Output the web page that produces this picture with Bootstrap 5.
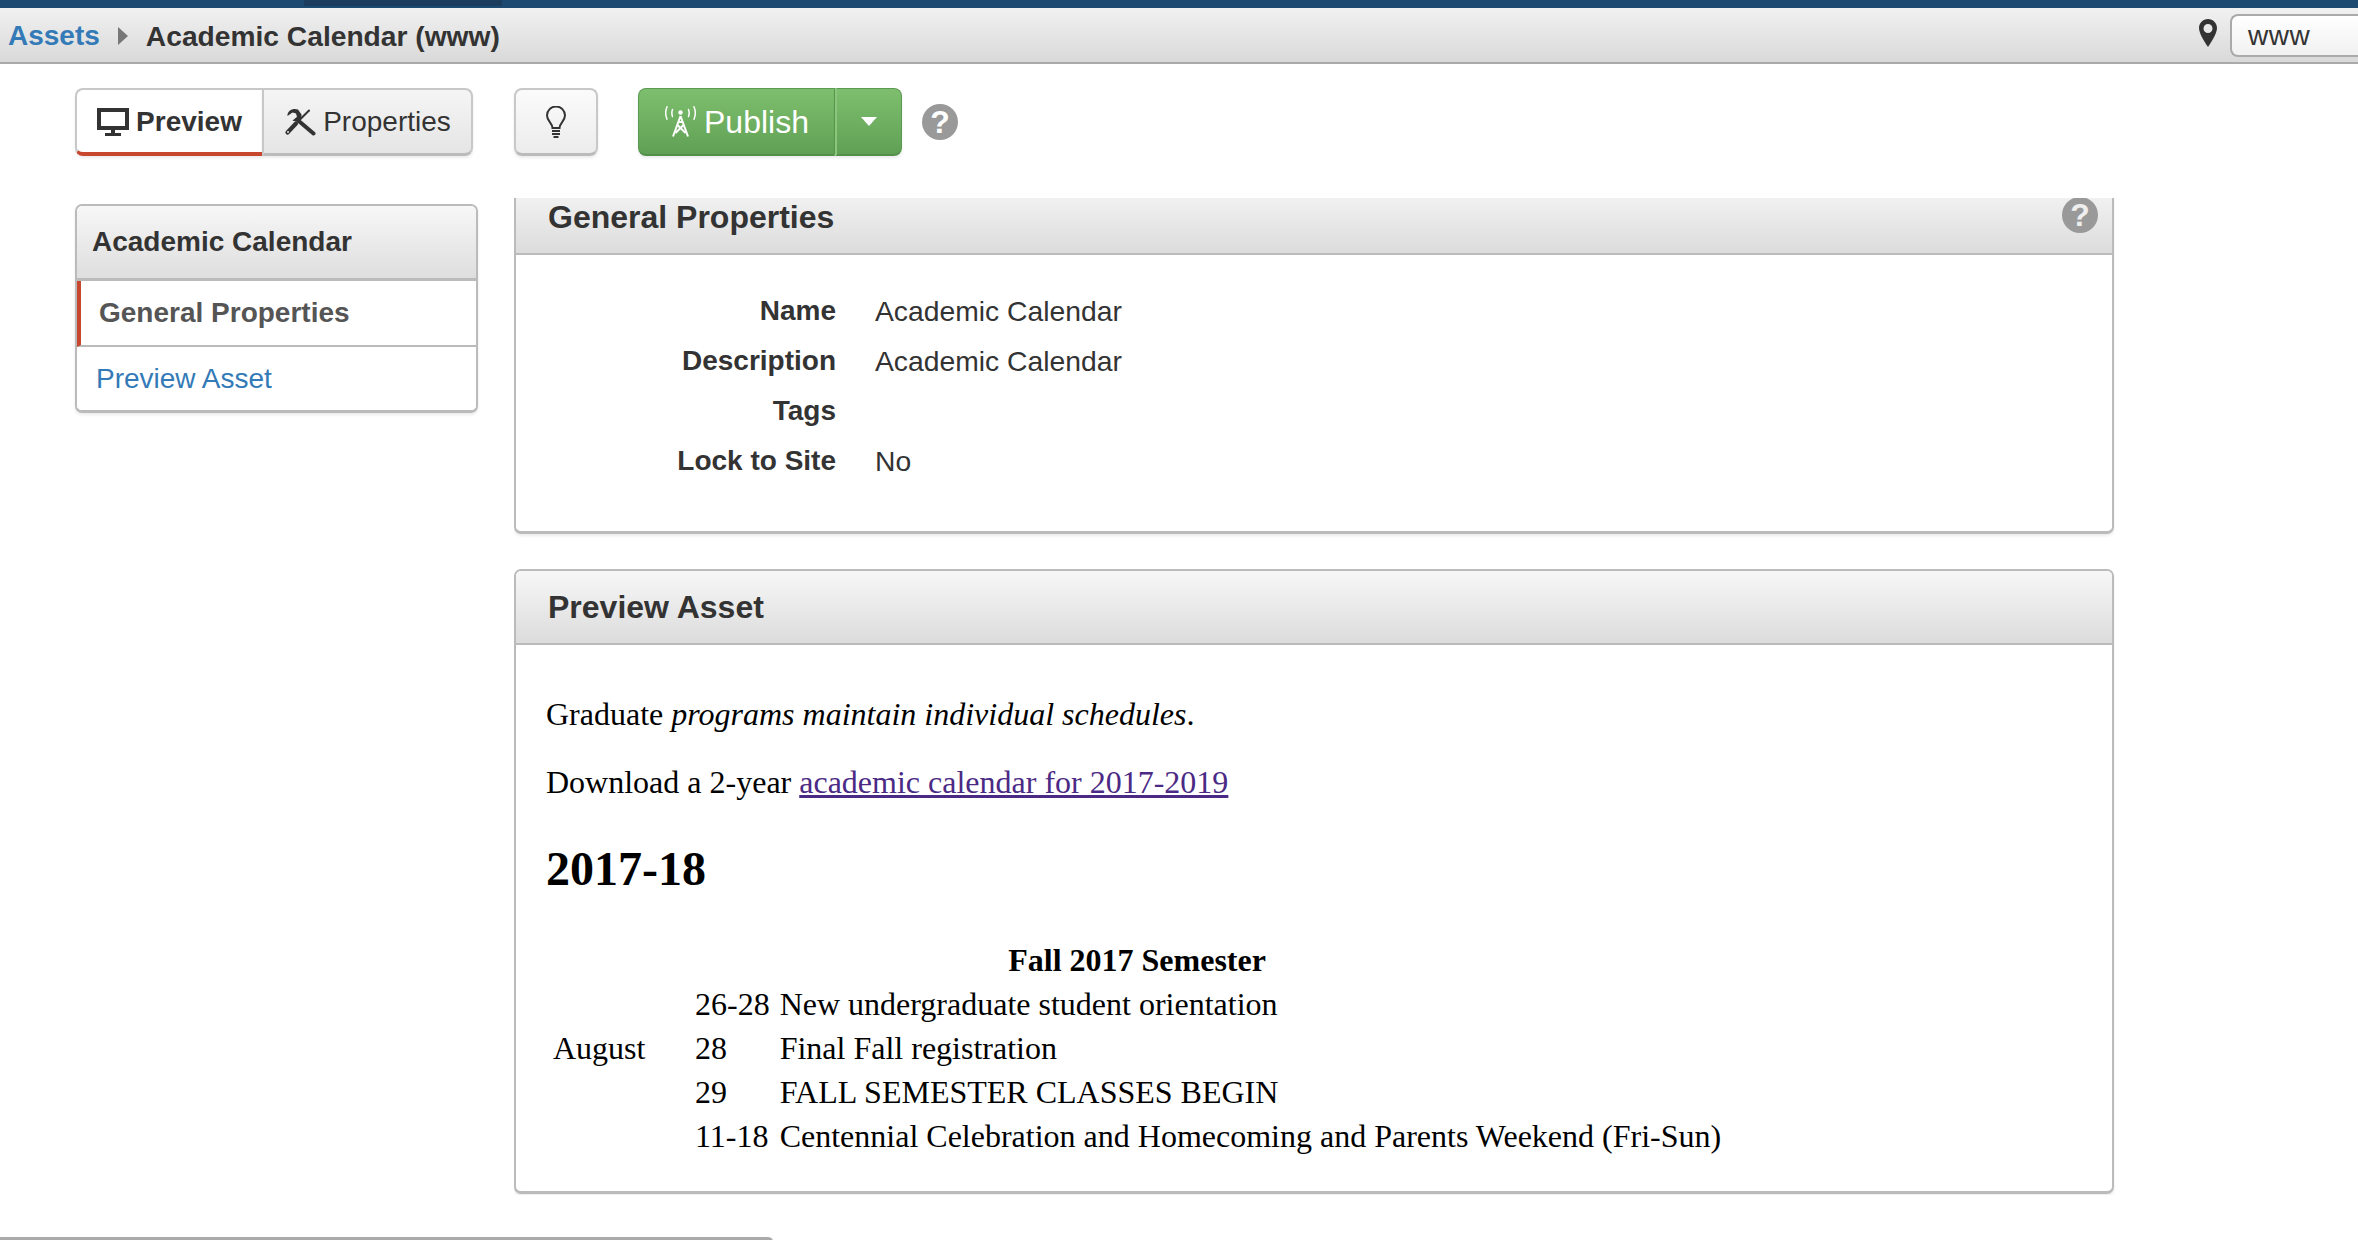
<!DOCTYPE html>
<html lang="en">
<head>
<meta charset="utf-8">
<title>Academic Calendar (www)</title>
<link href="https://cdn.jsdelivr.net/npm/bootstrap@5.3.0/dist/css/bootstrap.min.css" rel="stylesheet">
<style>
html,body{height:1240px;overflow:hidden;background:#fff}
body{font-family:"Liberation Sans",Arial,sans-serif;font-size:28px;color:#333}
.topstrip{height:8px;background:#1d4a70}
.topstrip-seg{width:198px;height:6px;margin-left:304px;background:#1c3d5e}
.crumbbar{height:56px;background:linear-gradient(#f1f1f1,#d9d9d9);border-bottom:2px solid #aaa;padding-left:8px;padding-right:0;padding-top:2px}
.crumbbar a{color:#337ab7;text-decoration:none;font-weight:700}
.crumb-now{font-weight:700;color:#333;font-size:28.2px}
.crumb-arrow{width:0;height:0;border-style:solid;border-width:9px 0 9px 10px;border-color:transparent transparent transparent #777;margin:0 18px 0 18px}
.pin{margin-right:13px;margin-top:-6px}
.sitebox{width:128px;height:43px;margin-top:-1px;border:2px solid #aaa;border-right:0;border-radius:8px 0 0 8px;background:linear-gradient(#fff,#f1f1f1);padding-left:16px;line-height:40px;color:#333;letter-spacing:.5px}
.toolbar{padding:24px 0 0 75px;gap:41px}
.toolbtn{font-size:28px;color:#333;border:2px solid #c8c8c8;border-bottom:3px solid #bbb;height:68px;background:linear-gradient(#f5f5f5,#e5e5e5);padding:0;line-height:1;display:flex;align-items:center;gap:7px;box-shadow:0 2px 3px rgba(0,0,0,.08)}
.toolbtn:hover{color:#333;border-color:#c8c8c8;background:linear-gradient(#f5f5f5,#e5e5e5)}
.btn-group>.tab-on{width:187px;justify-content:center;background:#fff;font-weight:700;border-right:0;border-bottom:4px solid #c7472f;border-radius:8px 0 0 8px;padding-top:2px}
.btn-group>.tab-off{width:211px;justify-content:center;margin-left:0!important;border-radius:0 8px 8px 0;border-left-color:#c8c8c8}
.bulbbtn{width:84px;justify-content:center;border-radius:8px;background:linear-gradient(#fbfbfb,#ececec)}
.pubwrap{margin-left:-1px;margin-right:-21px}
.btn-group>.pubbtn{width:197px;justify-content:center;gap:7px;font-size:32px;color:#fff;background:linear-gradient(#7dbf6e,#60a055);border:1px solid #5b9a50;border-bottom:2px solid #55904b;border-radius:8px 0 0 8px}
.btn-group>.pubcaret{width:67px;justify-content:center;margin-left:0!important;background:linear-gradient(#7dbf6e,#60a055);border:1px solid #5b9a50;border-left:2px solid #8ac67c;border-bottom:2px solid #55904b;border-radius:0 8px 8px 0}
.pubcaret-tri{width:0;height:0;border-style:solid;border-width:9px 8px 0 8px;border-color:#fff transparent transparent transparent}
.helpdot{width:36px;height:36px;flex:none;border-radius:50%;background:#999;color:#fff;font-weight:700;font-size:32px;line-height:36px;text-align:center}
.helpdot-light{color:#eee;margin-bottom:4px}
.columns{margin-top:42px;padding-left:75px;gap:36px}
.sidepanel{width:403px;margin-top:6px;flex:none;height:209px;border:2px solid #bbb;border-bottom-width:3px;border-radius:7px;box-shadow:0 2px 3px rgba(0,0,0,.08);overflow:hidden}
.sidehead{height:75px;flex:none;padding:0 0 0 15px;font-weight:700;font-size:28px;background:linear-gradient(#f7f7f7,#dedede);border-bottom:3px solid #bbb;border-radius:0}
.list-group-flush>.sideitem{height:66px;border-width:0 0 2px 0;border-style:solid;border-color:#bbb;border-radius:0;padding:0 0 0 20px;font-size:28px}
.list-group-flush>.sideitem-on{font-weight:700;color:#555;border-left:4px solid #c7472f;padding-left:18px}
.list-group-flush>.sideitem-link{height:63px;color:#337ab7;border-bottom-width:0;padding-left:19px;text-decoration:none}
.list-group-flush>.sideitem-link:hover{color:#337ab7}
.mainscroll{width:1610px;height:997px;overflow:hidden;flex:none}
.mainstack{margin-top:-19px;width:1600px;gap:35px}
.infopanel{border:2px solid #bbb;border-bottom-width:3px;border-radius:7px;box-shadow:0 2px 3px rgba(0,0,0,.08);--bs-card-bg:#fff}
.infohead{height:74px;padding:0 14px 0 32px;font-size:32px;font-weight:700;color:#333;background:linear-gradient(#f7f7f7,#dcdcdc);border-bottom:2px solid #bbb;border-radius:5px 5px 0 0!important}
.propbody{padding:31px 0 45px 0}
.proplist{display:grid;grid-template-columns:320px auto;column-gap:39px;grid-auto-rows:50px;align-items:center;margin:0}
.proplist dt{text-align:right;font-weight:700;color:#333}
.proplist dd{margin:0;color:#333;font-size:28.3px}
.docbody{padding:47px 0 33px 30px;font-family:"Liberation Serif","Times New Roman",serif;color:#000;font-size:32px;line-height:44px}
.docbody p{margin:0 0 24px}
.docbody a{color:#4b2a85}
.docbody h2{font-family:inherit;font-weight:700;font-size:48px;line-height:58px;margin:36px 0 40px;color:#000}
.caltable{margin-left:2px;font-size:32px;line-height:44px}
.caltable th{text-align:center;font-weight:700;padding:0 5px}
.caltable td{padding:0 5px}
.cal-month{width:142px}
.footerstub{width:774px;height:20px;margin-top:42px;background:#f7f7f7;border-top:3px solid #aaa;border-right:2px solid #ccc;border-top-right-radius:6px}
</style>
</head>
<body>
<div class="topstrip"><div class="topstrip-seg"></div></div>
<div class="crumbbar d-flex align-items-center">
  <a href="#">Assets</a>
  <span class="crumb-arrow"></span>
  <span class="crumb-now">Academic Calendar (www)</span>
  <span class="ms-auto d-flex align-items-center">
    <svg class="pin" width="18" height="28" viewBox="0 0 18 28" aria-hidden="true"><path fill="#333" fill-rule="evenodd" d="M9 0C4 0 0 4 0 9c0 5 5 13 9 19 4-6 9-14 9-19 0-5-4-9-9-9zm0 5a4.500 4.500 0 1 1 0 9 4.500 4.500 0 0 1 0-9z"/></svg>
    <span class="sitebox">www</span>
  </span>
</div>

<div class="toolbar d-flex align-items-center">
  <div class="btn-group">
    <button type="button" class="btn toolbtn tab-on">
      <svg width="32" height="28" viewBox="0 0 32 28" aria-hidden="true"><path fill="#333" fill-rule="evenodd" d="M0 0h32v22H0zM4 4v14h24V4zM14 22h4v3h-4zM8 25h16v3H8z"/></svg>Preview
    </button>
    <button type="button" class="btn toolbtn tab-off">
      <svg width="32" height="28" viewBox="0 0 32 28" aria-hidden="true"><g fill="none" stroke="#333" stroke-linecap="round"><path stroke-width="4" d="M13 11.500L29.500 25.500"/><path stroke-width="2" d="M25 2.500L14.500 13"/><path stroke-width="4.200" d="M12 15.500L3.500 24.500"/></g><path fill="#333" d="M14 1.500C9 -.5 3 2.500 3.500 8L8.500 4.500 12 5.500 13 9 8.500 12.500C13 14.500 18 11.500 17.500 6.500z"/><circle cx="4" cy="24" r="1" fill="#e8e8e8"/></svg>Properties
    </button>
  </div>
  <button type="button" class="btn toolbtn bulbbtn" aria-label="Tip">
    <svg width="20" height="32" viewBox="0 0 20 32" aria-hidden="true"><path fill="none" stroke="#333" stroke-width="2" d="M6.500 22c0-5-5.500-7-5.500-12.500a9 9 0 0 1 18 0C19 15 13.500 17 13.500 22z"/><path stroke="#333" stroke-width="2" d="M6 25h8M6 28h8M7.500 31h5"/></svg>
  </button>
  <div class="d-flex align-items-center pubwrap">
    <div class="btn-group">
      <button type="button" class="btn toolbtn pubbtn">
        <svg width="33" height="31" viewBox="0 0 33 31" aria-hidden="true"><g fill="none" stroke="#fff"><path stroke-width="2" d="M16.500 10L9 30.500M16.500 10L24 30.500M13.500 19L21.500 27M19.500 19L11.500 27M14 16h5"/><path stroke-width="1.500" stroke-linecap="round" d="M3 .8a16 16 0 0 0 0 12.400M30 .8a16 16 0 0 1 0 12.400M8.500 3.500a10 10 0 0 0 0 7M24.500 3.500a10 10 0 0 1 0 7"/></g><circle cx="16.500" cy="6.500" r="2.200" fill="#fff"/></svg>Publish
      </button>
      <button type="button" class="btn toolbtn pubcaret" aria-label="More"><span class="pubcaret-tri"></span></button>
    </div>
  </div>
  <span class="helpdot">?</span>
</div>

<div class="columns d-flex align-items-start">
  <aside class="card sidepanel">
    <div class="card-header sidehead d-flex align-items-center">Academic Calendar</div>
    <div class="list-group list-group-flush">
      <div class="list-group-item sideitem sideitem-on d-flex align-items-center">General Properties</div>
      <a href="#" class="list-group-item sideitem sideitem-link d-flex align-items-center">Preview Asset</a>
    </div>
  </aside>

  <div class="mainscroll">
    <div class="mainstack d-flex flex-column">
      <section class="card infopanel">
        <div class="card-header infohead d-flex justify-content-between align-items-center">
          <span>General Properties</span><span class="helpdot helpdot-light">?</span>
        </div>
        <div class="card-body propbody">
          <dl class="proplist">
            <dt>Name</dt><dd>Academic Calendar</dd>
            <dt>Description</dt><dd>Academic Calendar</dd>
            <dt>Tags</dt><dd></dd>
            <dt>Lock to Site</dt><dd>No</dd>
          </dl>
        </div>
      </section>

      <section class="card infopanel">
        <div class="card-header infohead d-flex align-items-center">Preview Asset</div>
        <div class="card-body docbody">
          <p>Graduate <em>programs maintain individual schedules</em>.</p>
          <p>Download a 2-year <a href="#">academic calendar for 2017-2019</a></p>
          <h2>2017-18</h2>
          <table class="caltable">
            <tbody>
              <tr><th colspan="3">Fall 2017 Semester</th></tr>
              <tr><td class="cal-month"></td><td>26-28</td><td>New undergraduate student orientation</td></tr>
              <tr><td class="cal-month">August</td><td>28</td><td>Final Fall registration</td></tr>
              <tr><td class="cal-month"></td><td>29</td><td>FALL SEMESTER CLASSES BEGIN</td></tr>
              <tr><td class="cal-month"></td><td>11-18</td><td>Centennial Celebration and Homecoming and Parents Weekend (Fri-Sun)</td></tr>
            </tbody>
          </table>
        </div>
      </section>
    </div>
  </div>
</div>
<div class="footerstub"></div>
<script src="https://cdn.jsdelivr.net/npm/bootstrap@5.3.0/dist/js/bootstrap.bundle.min.js"></script>
</body>
</html>
